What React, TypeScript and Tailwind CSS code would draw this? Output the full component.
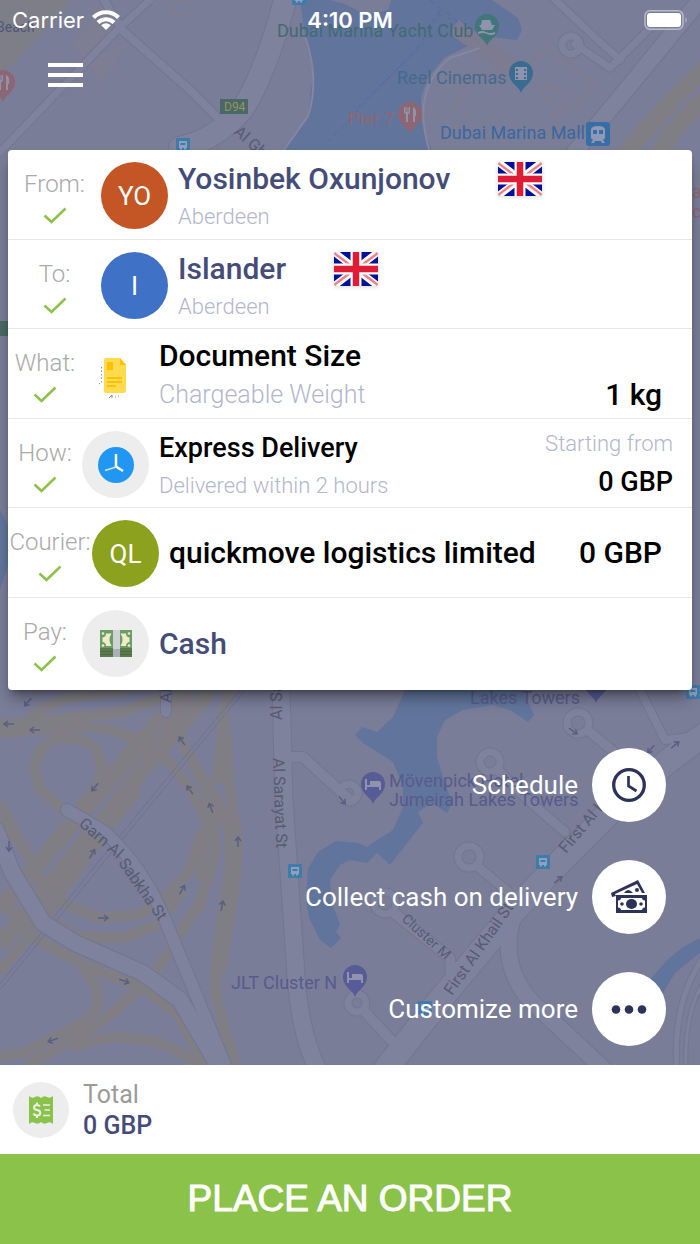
import type { ReactNode } from "react"
import clsx from "clsx"

const waterPaths = [
  "M300 0 L345 0 L392 0 L492 0 L518 18 L522 30 L517 40 L482 36 L468 46 L444 58 L428 78 L421 98 L422 122 L432 152 L282 152 L308 116 L313 74 L305 36 Z",
  "M405 690 L393 717 L377 732 L362 727 L355 735 L363 743 L393 762 L403 787 L403 807 L393 830 L377 840 L367 847 L358 843 L336 841 L318 852 L308 868 L306 900 L309 918 L320 940 L331 948 L341 938 L336 932 L340 925 L331 900 L330 880 L340 865 L350 860 L367 863 L377 853 L390 865 L423 823 L418 812 L432 803 L447 813 L452 803 L443 777 L437 757 L437 737 L445 720 L463 710 L493 705 L510 710 L528 722 L534 715 L523 690 Z",
  "M700 938 L683 947 L667 960 L650 980 L663 993 L675 973 L700 953 Z",
  "M0 510 L8 525 L8 565 L0 590 Z",
]

const highways = [
  "M0 733 L73 726 L107 728 L143 742 L170 763 L193 793 L207 823 L207 850 L200 880",
  "M68 812 L40 790 L35 767 L40 749 L57 738 L80 738 L97 750 L102 767 L97 787 L77 810",
  "M0 725 L123 712 L160 698",
  "M28 718 L46 707 L67 698 L127 690",
  "M170 717 L187 753 L217 800 L230 833 L230 870 L217 950 L215 990 L222 1020 L235 1065",
  "M187 753 L204 785 L213 820 L215 853 L200 903 L157 970 L113 1013 L73 1040 L27 1065",
  "M230 690 L223 710 L230 790 L238 847 L233 897 L220 973",
  "M224 715 L217 783",
  "M0 803 L17 837 L43 883 L67 905 L100 918 L137 915 L160 903 L190 870 L202 830",
  "M50 920 L77 937 L123 938 L157 925 L183 890",
  "M5 818 L9 860",
  "M0 900 L33 937 L80 963 L140 987 L177 1013 L205 1065",
  "M83 968 L97 987 L97 1007 L87 1020 L23 1053 L0 1056",
  "M73 1048 L100 1039 L120 1037 L153 1041 L180 1052 L200 1067",
  "M137 790 L97 843 L47 913 L0 972",
]

const wideHighways = [
  "M187 690 L137 747 L33 870 L0 910",
  "M210 690 L150 760 L110 813 L43 893 L0 945",
  "M705 68 Q665 105 625 155",
  "M705 98 Q670 130 658 155",
]

const roads = [
  { d: "M150 0 L117 30 L0 152", w: 7 },
  { d: "M104 0 L122 30 L190 90 L222 122", w: 8 },
  { d: "M285 0 Q265 75 242 110 Q215 140 180 148", w: 22 },
  { d: "M166 680 L166 712", w: 10 },
  { d: "M67 810 L105 832 Q145 870 165 920 L225 1065", w: 12 },
  { d: "M-4 830 L12 872 L43 923 L75 943 L143 973 L180 1000 L218 1065", w: 16 },
  { d: "M281 690 L284 800 L295 960 Q298 1030 318 1070", w: 17 },
  { d: "M290 757 L303 757 L350 800", w: 10 },
  { d: "M705 735 Q665 760 610 812 L555 867 L515 910 L440 1000 L385 1070", w: 24 },
  { d: "M512 920 Q500 965 530 1000 L605 1070", w: 16 },
  { d: "M590 732 L626 762", w: 9 },
  { d: "M498 770 L528 800 L565 832", w: 9 },
  { d: "M477 866 L512 895", w: 9 },
  { d: "M393 912 L450 958 L452 985", w: 10 },
  { d: "M365 1012 L402 1052", w: 10 },
  { d: "M550 -5 L600 42 L620 60", w: 7 },
  { d: "M575 44 L610 68 L660 18", w: 7 },
  { d: "M700 0 L575 152", w: 16 },
  { d: "M677 1070 Q672 1000 705 955", w: 5 },
  { d: "M686 1070 Q684 1010 705 980", w: 3 },
  { d: "M640 690 L665 740 L705 735", w: 8 },
]

const roundabouts = [
  [490, 762, 10],
  [469, 857, 11],
  [578, 723, 11],
  [385, 903, 11],
  [357, 1003, 9],
  [349, 793, 9],
  [571, 45, 9],
]

const flowArrows = [
  [28, 702, 130],
  [9, 724, 180],
  [35, 730, 180],
  [182, 741, 235],
  [95, 787, 130],
  [190, 790, 235],
  [211, 808, 250],
  [9, 846, 90],
  [92, 854, 300],
  [238, 842, 270],
  [103, 918, 0],
  [182, 890, 300],
  [222, 906, 280],
  [124, 981, 20],
  [53, 1040, 160],
  [342, 800, 50],
  [573, 731, 35],
  [651, 749, 130],
  [675, 745, 320],
  [558, 880, 320],
]

function Pin({ x, y, color, children }: { x: number; y: number; color: string; children?: ReactNode }) {
  return (
    <g transform={`translate(${x} ${y})`}>
      <path d="M0 18 C-2 11 -12 8 -12 -2 A12 12 0 0 1 12 -2 C12 8 2 11 0 18 Z" fill={color} />
      <g fill="#8f93ab" stroke="none">{children}</g>
    </g>
  )
}

function Bed() {
  return <path d="M-8 -7 h2 v6 h3 v-4 h9 q2 0 2 3 v6 h-2 v-3 h-12 v3 h-2 Z" />
}

function Fork() {
  return <path d="M-6 -9 v5 q0 2 2 2 v8 h2 v-8 q2 0 2 -2 v-5 h-1.5 v5 h-1 v-5 h-1 v5 h-1 v-5 Z M3 6 v-15 q4 1 3 9 h-1 v6 Z" />
}

function BusStop({ x, y }: { x: number; y: number }) {
  return (
    <g transform={`translate(${x} ${y})`}>
      <rect width="14" height="14" rx="1" fill="#3f7bab" />
      <path d="M3 3 h8 v7 h-1 v1.500 h-2 v-1.500 h-2 v1.500 h-2 v-1.500 h-1 Z M4.500 5 v2 h5 v-2 Z" fill="#8fa0bd" fillRule="evenodd" />
    </g>
  )
}

function MapBackground() {
  return (
    <svg
      className="absolute inset-0 h-full w-full"
      viewBox="0 0 700 1065"
      preserveAspectRatio="xMidYMin slice"
      fontFamily="Roboto, sans-serif"
      aria-hidden="true"
    >
      <rect width="700" height="1065" fill="#797d98" />
      <path d="M0 0 H72 L52 22 L14 64 L0 74 Z" fill="#7d7e88" />
      <path d="M104 0 L72 45 L90 65 L122 30 Z M130 42 L102 82 L86 60 Z" fill="#7d7d93" />

      {/* water */}
      {waterPaths.map(d => <path key={d} d={d} fill="#61759c" />)}
      <path d="M330 0 H391 L388 10 L366 15 L345 4 Z" fill="#797d98" />
      <path d="M458 20 L520 62 L508 76 L450 34 Z" fill="#7d7b91" />
      <path d="M455 108 L470 75 L512 73 M540 92 L562 108 Q590 105 593 82 L548 48 L522 70 M540 92 L548 84 L566 97 M556 110 L556 148" fill="none" stroke="#807b8d" strokeWidth="2" />
      <path d="M437 14 L458 22 M430 0 L458 22 M440 28 L355 110 M440 10 L420 45 L322 148" fill="none" stroke="#566b99" strokeDasharray="5 5" />
      <path d="M305 36 Q320 80 308 116 L284 150 M430 152 Q410 90 450 58 L480 48" fill="none" stroke="#8387a0" strokeWidth="2" />
      <path d="M171 1 h17 l-1 15 l-15 -2 Z" fill="none" stroke="#817d8c" strokeWidth="1" />

      {/* highways: darker edge first, fill on top */}
      {wideHighways.map(d => <path key={d} d={d} fill="none" stroke="#877d7f" strokeWidth="17" />)}
      {wideHighways.map(d => <path key={d} d={d} fill="none" stroke="#7e7e84" strokeWidth="15" />)}
      {wideHighways.map(d => <path key={d} d={d} fill="none" stroke="#837c80" strokeWidth="1" />)}
      {highways.map(d => <path key={d} d={d} fill="none" stroke="#877d7f" strokeWidth="10" strokeLinejoin="round" />)}
      {highways.map(d => <path key={d} d={d} fill="none" stroke="#7e7e84" strokeWidth="8" strokeLinejoin="round" />)}
      <path d="M245 690 L112 852 L0 990 M240 690 L108 850 L0 984" fill="none" stroke="#6f7391" strokeWidth="1" />

      {/* streets */}
      {roads.map(r => <path key={r.d} d={r.d} fill="none" stroke="#72768f" strokeWidth={r.w + 2} strokeLinecap="round" strokeLinejoin="round" />)}
      {roundabouts.map(([x, y, r]) => <circle key={`${x}-${y}`} cx={x} cy={y} r={r} fill="none" stroke="#72768f" strokeWidth="9" />)}
      {roads.map(r => <path key={r.d} d={r.d} fill="none" stroke="#7e829d" strokeWidth={r.w} strokeLinecap="round" strokeLinejoin="round" />)}
      {roundabouts.map(([x, y, r]) => <circle key={`${x}-${y}`} cx={x} cy={y} r={r} fill="none" stroke="#7e829d" strokeWidth="7" />)}

      {flowArrows.map(([x, y, a]) => (
        <path key={`${x}-${y}`} d="M-5 0 H4 M1 -3 L5 0 L1 3" transform={`translate(${x} ${y}) rotate(${a})`} fill="none" stroke="#5a5f80" strokeWidth="1.500" />
      ))}

      <BusStop x={292} y={-9} />
      <BusStop x={176} y={138} />
      <BusStop x={288} y={864} />
      <BusStop x={536} y={855} />
      <BusStop x={686} y={685} />
      <BusStop x={418} y={1001} />

      {/* street names */}
      <g fill="#575b74" fontSize="16">
        <text transform="translate(233 133) rotate(42)">Al Gharbi St</text>
        <text transform="translate(273 758) rotate(88)">Al Sarayat St</text>
        <text transform="translate(282 720) rotate(-90)">Al Sarayat</text>
        <text transform="translate(171 703) rotate(-88)">Al</text>
        <text transform="translate(78 825) rotate(41)">Garn Al</text>
        <text transform="translate(118 863) rotate(55)">Sabkha St</text>
        <text transform="translate(566 854) rotate(-50)">First Al Khail St</text>
        <text transform="translate(452 996) rotate(-55)">First Al Khail St</text>
        <text transform="translate(401 920) rotate(42)" fontSize="14">Cluster M</text>
      </g>

      {/* places */}
      <g fontSize="18">
        <text x="-4" y="32" fontSize="14" fill="#515576">Beach</text>
        <text x="277" y="37" fill="#416b73">Dubai Marina Yacht Club</text>
        <text x="397" y="84" fill="#446a8b">Reel Cinemas</text>
        <text x="348" y="125" fill="#8d6674">Pier 7</text>
        <text x="440" y="139" fill="#3b679f">Dubai Marina Mall</text>
        <g fill="#575b8c">
          <text x="470" y="704">Lakes Towers</text>
          <text x="389" y="787">Mövenpick Hotel</text>
          <text x="389" y="806">Jumeirah Lakes Towers</text>
          <text x="231" y="989">JLT Cluster N</text>
        </g>
        <text x="692" y="198" fill="#8d6674">a</text>
        <text x="692" y="218" fill="#8d6674">ci</text>
      </g>
      <rect x="220" y="99" width="28" height="15" fill="#4b6868" />
      <text x="224" y="111" fontSize="12" fill="#93955a">D94</text>
      <rect x="0" y="321" width="9" height="15" fill="#4b6868" />

      <Pin x={487} y={28} color="#41777a">
        <path d="M-5 -8 h8 l2 5 h3 l-3 5 h-10 l-3 -5 h2 Z M-9 4 q4 -2 8 0 t9 0 v2 q-4 2 -8 0 t-9 0 Z" />
      </Pin>
      <Pin x={521} y={75} color="#3a6c92">
        <path d="M-6 -8 h12 v13 h-12 Z" />
        <path d="M-4 -6 v2 M-4 -2 v2 M-4 2 v2 M4 -6 v2 M4 -2 v2 M4 2 v2" stroke="#3a6c92" strokeWidth="2" />
      </Pin>
      <Pin x={410} y={116} color="#8d6674"><Fork /></Pin>
      <Pin x={3} y={84} color="#8d6674"><Fork /></Pin>
      <Pin x={373} y={786} color="#575b96"><Bed /></Pin>
      <Pin x={355} y={979} color="#575b96"><Bed /></Pin>
      <Pin x={596} y={685} color="#575b96" />
      <rect x="586" y="122" width="24" height="24" rx="3" fill="#386ea6" />
      <path d="M591 130 q0 -4 7 -4 t7 4 v8 l-2 2 l2 3 h-3 l-1 -2 h-6 l-1 2 h-3 l2 -3 l-2 -2 Z M593 130 v4 h4 v-4 Z M599 130 v4 h4 v-4 Z" fill="#8f98b4" fillRule="evenodd" />
    </svg>
  )
}

function StatusBar() {
  return (
    <div className="grid h-10 grid-cols-3 items-center px-3 font-[Inter,sans-serif] text-[22px] leading-10 text-white">
      <div className="flex items-center gap-2">
        <span>Carrier</span>
        <svg className="h-5 w-7" viewBox="0 0 28 20" aria-label="Wi-Fi">
          <g fill="none" stroke="#fff" strokeWidth="4.200">
            <path d="M1.500 7.500 A17.500 17.500 0 0 1 26.500 7.500" />
            <path d="M6 12.500 A11.500 11.500 0 0 1 22 12.500" />
          </g>
          <path d="M14 20 L9.200 15.300 A6.800 6.800 0 0 1 18.800 15.300 Z" fill="#fff" />
        </svg>
      </div>
      <span className="text-center font-semibold whitespace-nowrap">4:10 PM</span>
      <svg className="h-5 w-11 justify-self-end" viewBox="0 0 44 20" aria-label="Battery">
        <rect x="1" y="0.750" width="38" height="18.500" rx="5" fill="none" stroke="#b9bccb" strokeWidth="1.500" />
        <rect x="3" y="3" width="34" height="14" rx="3" fill="#fff" />
        <path d="M41.500 7 Q44 10 41.500 13 Z" fill="#b9bccb" />
      </svg>
    </div>
  )
}

function UnionJack() {
  return (
    <svg className="h-[34px] w-11 shrink-0 drop-shadow-sm" viewBox="0 0 44 34" role="img" aria-label="United Kingdom">
      <clipPath id="flag-shape">
        <rect width="44" height="34" rx="3" />
      </clipPath>
      <g clipPath="url(#flag-shape)">
        <rect width="44" height="34" fill="#00109a" />
        <path d="M0 0 L44 34 M44 0 L0 34" stroke="#fff" strokeWidth="7" />
        <path d="M0 1 L20 16 M44 1 L24 16 M0 33 L20 18 M44 33 L24 18" stroke="#ef8088" strokeWidth="2.500" />
        <path d="M22 0 V34 M0 17 H44" stroke="#fff" strokeWidth="11" />
        <path d="M22 0 V34 M0 17 H44" stroke="#de1c35" strokeWidth="6.500" />
      </g>
    </svg>
  )
}

function Avatar({ color, children }: { color: string; children: ReactNode }) {
  return (
    <div className={clsx("mt-3 flex size-[67px] shrink-0 items-center justify-center rounded-full text-[26px] leading-none text-white", color)}>
      {children}
    </div>
  )
}

function DocumentIcon() {
  return (
    <svg className="size-[67px]" viewBox="0 0 67 67" aria-hidden="true">
      <path d="M24 17 h14 l6 7 v25 q0 3 -3 3 h-18 q-1 0 -1 -2 v-31 q0 -2 2 -2 Z" fill="#ffdb4d" />
      <path d="M38 17 l6 7 h-6 Z M25 21 h6 v8 h-6 Z M25 36 h15 v2 h-15 Z M25 40 h15 v2 h-15 Z M25 44 h9 v2 h-9 Z" fill="#ffc107" />
      <path d="M19.500 26 v17 M17.500 42 v1" stroke="#999" strokeDasharray="1.500 2" />
      <path d="M27 57 l3 -3 v3 M33 56 h1 M36 55 h1" stroke="#888" fill="none" />
    </svg>
  )
}

function SpeedClockIcon() {
  return (
    <svg className="size-9" viewBox="0 0 36 36" aria-hidden="true">
      <circle cx="18" cy="18" r="18" fill="#2196f3" />
      <path d="M18 20 V7" stroke="#fff" strokeWidth="2.500" />
      <path d="M17 19 L25 24" stroke="#fff" strokeWidth="2.500" />
      <path d="M18 20 L7 23.500" stroke="#cfe7fd" strokeWidth="1.500" />
    </svg>
  )
}

function BanknoteIcon() {
  return (
    <svg className="h-7 w-8" viewBox="0 0 32 28" aria-hidden="true">
      <rect width="32" height="19" fill="#699e64" />
      <rect y="18" width="32" height="9" fill="#5b7a4e" />
      <path d="M0 21.500 H32 M0 24.500 H32" stroke="#4e6b43" />
      <g fill="#f0ecc8">
        <path d="M6 3.500 H11.500 Q7.500 9.500 11.500 16 H6 Q6 12.500 2.500 12 V7.500 Q6 7 6 3.500 Z" />
        <path d="M26 3.500 H20.500 Q24.500 9.500 20.500 16 H26 Q26 12.500 29.500 12 V7.500 Q26 7 26 3.500 Z" />
        <circle cx="3" cy="3.500" r="1.300" />
        <circle cx="29" cy="3.500" r="1.300" />
        <circle cx="3" cy="15.500" r="1.300" />
        <circle cx="29" cy="15.500" r="1.300" />
      </g>
      <rect x="13" width="7" height="19" fill="#cfd3d7" />
      <rect x="13" y="19" width="7" height="8" fill="#aab0b4" />
    </svg>
  )
}

function ReceiptIcon() {
  return (
    <svg className="h-7 w-6" viewBox="0 0 24 28" aria-hidden="true">
      <path d="M0 0 Q3 3 6 1 Q9 -1 12 2 Q15 -1 18 1 Q21 3 24 0 V28 Q21 25 18 27 Q15 29 12 26 Q9 29 6 27 Q3 25 0 28 Z" fill="#8bc34a" />
      <path d="M14 9 H21 M15.500 14 H21 M14 19.500 H21" stroke="#eee" strokeWidth="1.500" />
      <path d="M11 10.500 Q10 9 8 9 Q5 9 5 11.500 Q5 13.500 8 14 Q11.300 14.500 11.300 17 Q11.300 19.500 8 19.500 Q5.500 19.500 4.500 17.500 M8 6.500 V9 M8 19.500 V22" fill="none" stroke="#eee" strokeWidth="2" />
    </svg>
  )
}

function OrderRow({ label, labelWidth, icon, children }: { label: string; labelWidth: string; icon: ReactNode; children: ReactNode }) {
  return (
    <li className="flex border-b border-gray-200 odd:h-[90px] even:h-[89px] last:min-h-[92px] last:border-b-0">
      <div className={clsx("flex shrink-0 flex-col items-center pt-4", labelWidth)}>
        <span className="text-[24px] leading-9 font-light whitespace-nowrap text-[#a9a9a9]">{label}</span>
        <svg className="h-7 w-6" viewBox="0 0 24 28" role="img" aria-label="done">
          <path d="M1.500 13.500 L8.500 20 L22.500 6.500" fill="none" stroke="#8bc34a" strokeWidth="2.500" />
        </svg>
      </div>
      {icon}
      {children}
    </li>
  )
}

const title = "text-[30px] leading-[38px] font-medium whitespace-nowrap"
const subtitle = "text-[27px] leading-[38px] font-medium whitespace-nowrap"
const caption = "text-[22px] leading-[38px] font-light whitespace-nowrap text-[#b4b6cc]"

function OrderCard() {
  return (
    <ul className="mx-2 rounded-sm bg-white shadow-lg shadow-black/40">
      <OrderRow label="From:" labelWidth="w-[93px]" icon={<Avatar color="bg-[#c45525]">YO</Avatar>}>
        <div className="pt-[10px] pl-[10px]">
          <div className="flex items-center gap-12">
            <span className={clsx(title, "text-[#454c78]")}>Yosinbek Oxunjonov</span>
            <UnionJack />
          </div>
          <p className={caption}>Aberdeen</p>
        </div>
      </OrderRow>
      <OrderRow label="To:" labelWidth="w-[93px]" icon={<Avatar color="bg-[#3f72c6]">I</Avatar>}>
        <div className="pt-[10px] pl-[10px]">
          <div className="flex items-center gap-12">
            <span className={clsx(title, "text-[#454c78]")}>Islander</span>
            <UnionJack />
          </div>
          <p className={caption}>Aberdeen</p>
        </div>
      </OrderRow>
      <OrderRow label="What:" labelWidth="w-[74px]" icon={<Avatar color="bg-white"><DocumentIcon /></Avatar>}>
        <div className="flex-1 pt-2 pr-[30px] pl-[10px]">
          <p className={clsx(title, "text-black")}>Document Size</p>
          <div className="flex justify-between">
            <span className="text-[25px] leading-10 font-light whitespace-nowrap text-[#b4b6cc]">Chargeable Weight</span>
            <span className="text-[30px] leading-10 font-medium whitespace-nowrap text-black">1 kg</span>
          </div>
        </div>
      </OrderRow>
      <OrderRow label="How:" labelWidth="w-[74px]" icon={<Avatar color="bg-[#ededed]"><SpeedClockIcon /></Avatar>}>
        <div className="flex flex-1 justify-between pr-[19px] pl-[10px]">
          <div className="pt-[10px]">
            <p className={clsx(subtitle, "text-black")}>Express Delivery</p>
            <p className={caption}>Delivered within 2 hours</p>
          </div>
          <div className="pt-[6px] text-right">
            <p className={caption}>Starting from</p>
            <p className={clsx(subtitle, "text-black")}>0 GBP</p>
          </div>
        </div>
      </OrderRow>
      <OrderRow label="Courier:" labelWidth="w-[84px]" icon={<Avatar color="bg-[#8ca21f]">QL</Avatar>}>
        <div className={clsx(title, "flex flex-1 items-center justify-between pr-[30px] pl-[10px] text-black")}>
          <span>quickmove logistics limited</span>
          <span>0 GBP</span>
        </div>
      </OrderRow>
      <OrderRow label="Pay:" labelWidth="w-[74px]" icon={<Avatar color="bg-[#ededed]"><BanknoteIcon /></Avatar>}>
        <div className={clsx(title, "flex items-center pl-[10px] text-[#454c78]")}>Cash</div>
      </OrderRow>
    </ul>
  )
}

function ClockIcon() {
  return (
    <svg className="size-9" viewBox="0 0 36 36" fill="none" stroke="#2d325a" aria-hidden="true">
      <circle cx="18" cy="18" r="15.300" strokeWidth="3.300" />
      <path d="M17.500 9 V19 L25.500 24" strokeWidth="2.700" />
    </svg>
  )
}

function CashIcon() {
  return (
    <svg className="size-9" viewBox="0 0 36 36" aria-hidden="true">
      <path d="M1 18 L0 14 L27 1 L34 14 H31 L26 5 L4 15 L5 17 Z" fill="#2d325a" />
      <path d="M13 14 Q17 8 22 14 Z" fill="#2d325a" />
      <circle cx="26" cy="11" r="2" fill="#2d325a" />
      <path d="M5 16 H36 V34 H5 Z M10 19 Q10 21 7 21.500 V28.500 Q10 29 10 31 H31 Q31 29 34 28.500 V21.500 Q31 21 31 19 Z" fill="#2d325a" fillRule="evenodd" />
      <ellipse cx="20.500" cy="25" rx="5.500" ry="5" fill="#2d325a" />
      <circle cx="11" cy="25" r="1.800" fill="#2d325a" />
      <circle cx="30" cy="25" r="1.800" fill="#2d325a" />
    </svg>
  )
}

function MoreIcon() {
  return (
    <svg className="size-9" viewBox="0 0 36 36" fill="#2d325a" aria-hidden="true">
      <circle cx="5" cy="18.500" r="4.300" />
      <circle cx="18" cy="18.500" r="4.300" />
      <circle cx="31" cy="18.500" r="4.300" />
    </svg>
  )
}

const actions = [
  { label: "Schedule", icon: <ClockIcon /> },
  { label: "Collect cash on delivery", icon: <CashIcon /> },
  { label: "Customize more", icon: <MoreIcon /> },
]

export default function App() {
  return (
    <div className="flex min-h-screen flex-col bg-white font-[Roboto,sans-serif]">
      <main className="relative flex-1 overflow-hidden bg-[#797d98]">
        <MapBackground />
        <div className="relative flex flex-col">
          <StatusBar />
          <header className="h-[110px] px-12 pt-4">
            <button type="button" aria-label="Menu" className="flex h-[38px] flex-col justify-center gap-[6px]">
              <span className="h-1 w-[35px] bg-white" />
              <span className="h-1 w-[35px] bg-white" />
              <span className="h-1 w-[35px] bg-white" />
            </button>
          </header>
          <OrderCard />
          <div className="flex flex-col items-end gap-[38px] pt-[58px] pr-[34px] pb-[19px]">
            {actions.map(a => (
              <button key={a.label} type="button" className="flex items-center gap-[14px] text-[26px] leading-9 text-white">
                <span>{a.label}</span>
                <span className="flex size-[74px] items-center justify-center rounded-full bg-white">{a.icon}</span>
              </button>
            ))}
          </div>
        </div>
      </main>

      <section className="flex h-[89px] items-center gap-[14px] px-[13px]">
        <div className="flex size-14 items-center justify-center rounded-full bg-[#ededed]">
          <ReceiptIcon />
        </div>
        <div className="text-[25px] leading-[31px]">
          <p className="text-[#9b9b9b]">Total</p>
          <p className="font-medium text-[#454c78]">0 GBP</p>
        </div>
      </section>
      <button type="button" className="h-[90px] bg-[#8bc34a] font-['Liberation_Sans',Arial,sans-serif] text-[37px] text-white [-webkit-text-stroke:1px_white]">
        PLACE AN ORDER
      </button>
    </div>
  )
}
